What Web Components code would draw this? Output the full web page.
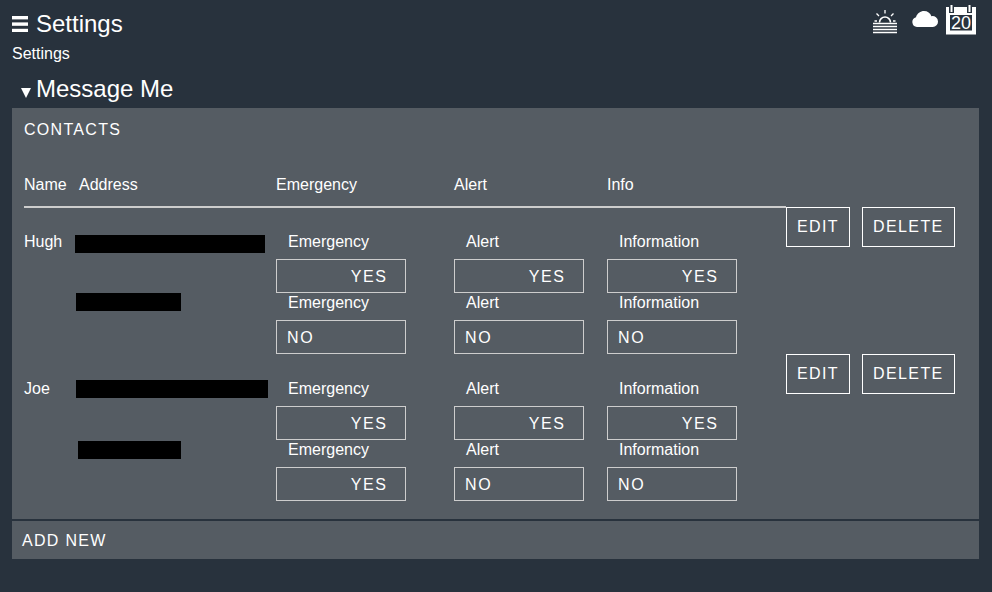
<!DOCTYPE html>
<html>
<head>
<meta charset="utf-8">
<title>Settings</title>
<style>
    html, body {
        margin: 0;
        height: 592px;
        overflow: hidden;
        background: #28323d;
        color: #fff;
        font: 16px/18px "Liberation Sans", Arial, sans-serif;
    }
</style>
</head>
<body>
<settings-page>
    <app-header title="Settings" crumb="Settings"></app-header>
    <section-title>Message Me</section-title>
    <contact-panel>
        <contact-row name="Hugh">
            <redacted-block slot="address" left="0" top="28" width="190"></redacted-block>
            <redacted-block slot="address" left="1" top="40" width="105"></redacted-block>
            <toggle-field slot="emergency" label="Emergency" on></toggle-field>
            <toggle-field slot="emergency" label="Emergency"></toggle-field>
            <toggle-field slot="alert" label="Alert" on></toggle-field>
            <toggle-field slot="alert" label="Alert"></toggle-field>
            <toggle-field slot="info" label="Information" on></toggle-field>
            <toggle-field slot="info" label="Information"></toggle-field>
        </contact-row>
        <contact-row name="Joe">
            <redacted-block slot="address" left="1" top="26" width="192"></redacted-block>
            <redacted-block slot="address" left="3" top="43" width="103"></redacted-block>
            <toggle-field slot="emergency" label="Emergency" on></toggle-field>
            <toggle-field slot="emergency" label="Emergency" on></toggle-field>
            <toggle-field slot="alert" label="Alert" on></toggle-field>
            <toggle-field slot="alert" label="Alert"></toggle-field>
            <toggle-field slot="info" label="Information" on></toggle-field>
            <toggle-field slot="info" label="Information"></toggle-field>
        </contact-row>
    </contact-panel>
    <add-bar>ADD NEW</add-bar>
</settings-page>

<script>
const COLUMNS = "51px 201px 178px 153px 179px 1fr";

class SettingsPage extends HTMLElement {
    constructor() {
        super();
        this.attachShadow({ mode: "open" });
        this.shadowRoot.innerHTML = `
            <style>
                :host { display: block; padding: 0 13px 0 12px; }
            </style>
            <slot></slot>
        `;
    }
}

class AppHeader extends HTMLElement {
    constructor() {
        super();
        this.attachShadow({ mode: "open" });
    }

    connectedCallback() {
        this.shadowRoot.innerHTML = `
            <style>
                :host { display: block; height: 75px; }
                .top { display: flex; align-items: flex-start; height: 45px; }
                .menu { width: 16px; height: 16px; margin: 16px 8px 0 0; flex: none; }
                h1 { margin: 10px 0 0; font: 24px/28px "Liberation Sans", Arial, sans-serif; flex: 1; }
                .icons { display: flex; align-items: flex-start; margin-right: 3px; }
                .sun { width: 24px; height: 24px; margin: 10px 15px 0 0; }
                .cloud { width: 26px; height: 16px; margin: 11px 8px 0 0; }
                .calendar { position: relative; width: 30px; height: 30px; margin-top: 5px; }
                .calendar svg { display: block; }
                .day {
                    position: absolute;
                    left: 0;
                    right: 0;
                    top: 9px;
                    text-align: center;
                    font-size: 18px;
                    line-height: 18px;
                }
                .crumb { height: 18px; }
            </style>
            <div class="top">
                <svg class="menu" viewBox="0 0 16 16" fill="#fff">
                    <rect y="0" width="16" height="3.4"/>
                    <rect y="6.4" width="16" height="3.4"/>
                    <rect y="12.8" width="16" height="3.2"/>
                </svg>
                <h1>${this.getAttribute("title")}</h1>
                <div class="icons">
                    <svg class="sun" viewBox="0 0 24 24" fill="none" stroke="#fff">
                        <path d="M6.5 12.5a5.5 5.5 0 0 1 11 0" stroke-width="1.6"/>
                        <path d="M12 0v3.5M3.5 3.5l2.5 2.5M20.5 3.5L18 6M1.5 11h2.5M20 11h2.5" stroke-width="1.3"/>
                        <path d="M0 13.5h24M0 16.5h24M0 19.5h24M0 22.5h24" stroke-width="1.5"/>
                    </svg>
                    <svg class="cloud" viewBox="0 0 26 16" fill="#fff">
                        <path d="M5 16a5 5 0 0 1-1-9.8C5 2.500 8.500 0 12 0c3.600 0 6.300 2 7.400 5.200A5.500 5.500 0 0 1 26 10.500 5.400 5.400 0 0 1 20.800 16z"/>
                    </svg>
                    <div class="calendar">
                        <svg width="30" height="30" viewBox="0 0 30 30">
                            <rect y="2" width="30" height="27.500" fill="#fff"/>
                            <rect x="4" y="10" width="22" height="15.500" fill="#28323d"/>
                            <rect x="3" y="2" width="5" height="6" fill="#28323d"/>
                            <rect x="21" y="2" width="5" height="6" fill="#28323d"/>
                            <rect x="4.500" y="0" width="2" height="7" fill="#fff"/>
                            <rect x="22.500" y="0" width="2" height="7" fill="#fff"/>
                        </svg>
                        <span class="day">20</span>
                    </div>
                </div>
            </div>
            <div class="crumb">${this.getAttribute("crumb")}</div>
        `;
    }
}

class SectionTitle extends HTMLElement {
    constructor() {
        super();
        this.attachShadow({ mode: "open" });
        this.shadowRoot.innerHTML = `
            <style>
                :host {
                    display: flex;
                    align-items: center;
                    height: 28px;
                    padding-left: 9px;
                    font-size: 24px;
                    line-height: 28px;
                    margin-bottom: 5px;
                }
                svg { width: 10px; height: 10px; margin: 8px 5px 0 0; }
            </style>
            <svg viewBox="0 0 10 10" fill="#fff"><path d="M0 0h10L5 10z"/></svg>
            <slot></slot>
        `;
    }
}

class ContactPanel extends HTMLElement {
    constructor() {
        super();
        this.attachShadow({ mode: "open" });
        this.shadowRoot.innerHTML = `
            <style>
                :host {
                    display: block;
                    background: #555c63;
                    padding: 13px 12px 18px;
                    height: 380px;
                }
                .title { letter-spacing: 1.3px; line-height: 18px; }
                .head {
                    display: grid;
                    grid-template-columns: ${COLUMNS};
                    margin-top: 37px;
                }
                .head span { height: 18px; }
                .head .address { padding-left: 4px; }
                hr {
                    margin: 12px 0 -1px;
                    width: 762px;
                    height: 2px;
                    border: 0;
                    background: #cdcdcd;
                }
            </style>
            <div class="title">CONTACTS</div>
            <div class="head">
                <span>Name</span>
                <span class="address">Address</span>
                <span>Emergency</span>
                <span>Alert</span>
                <span>Info</span>
            </div>
            <hr>
            <slot></slot>
        `;
    }
}

class ContactRow extends HTMLElement {
    constructor() {
        super();
        this.attachShadow({ mode: "open" });
    }

    connectedCallback() {
        this.shadowRoot.innerHTML = `
            <style>
                :host {
                    display: grid;
                    grid-template-columns: ${COLUMNS};
                    height: 147px;
                    position: relative;
                }
                .name { padding-top: 26px; }
                .toggles { padding-top: 25px; }
                .actions { display: flex; gap: 12px; align-items: flex-start; }
            </style>
            <div class="name">${this.getAttribute("name")}</div>
            <div><slot name="address"></slot></div>
            <div class="toggles"><slot name="emergency"></slot></div>
            <div class="toggles"><slot name="alert"></slot></div>
            <div class="toggles"><slot name="info"></slot></div>
            <div class="actions">
                <action-button width="64">EDIT</action-button>
                <action-button width="93">DELETE</action-button>
            </div>
        `;
    }
}

class RedactedBlock extends HTMLElement {
    constructor() {
        super();
        this.attachShadow({ mode: "open" });
    }

    connectedCallback() {
        const left = this.getAttribute("left");
        const top = this.getAttribute("top");
        const width = this.getAttribute("width");
        this.shadowRoot.innerHTML = `
            <style>
                :host {
                    display: block;
                    height: 18px;
                    background: #000;
                    margin: ${top}px 0 0 ${left}px;
                    width: ${width}px;
                }
            </style>
        `;
    }
}

class ToggleField extends HTMLElement {
    constructor() {
        super();
        this.attachShadow({ mode: "open" });
    }

    connectedCallback() {
        const on = this.hasAttribute("on");
        this.shadowRoot.innerHTML = `
            <style>
                :host { display: block; height: 61px; }
                .label { height: 26px; padding: 1px 0 0 12px; }
                .box {
                    box-sizing: border-box;
                    width: 130px;
                    height: 34px;
                    border: 1px solid #cdcdcd;
                    padding: 0 17.4px 0 10px;
                    line-height: 33px;
                    letter-spacing: 1.6px;
                    text-align: ${on ? "right" : "left"};
                }
            </style>
            <div class="label">${this.getAttribute("label")}</div>
            <div class="box">${on ? "YES" : "NO"}</div>
        `;
    }
}

class ActionButton extends HTMLElement {
    constructor() {
        super();
        this.attachShadow({ mode: "open" });
    }

    connectedCallback() {
        this.shadowRoot.innerHTML = `
            <style>
                :host {
                    display: block;
                    box-sizing: border-box;
                    width: ${this.getAttribute("width")}px;
                    height: 40px;
                    border: 1px solid #fff;
                    padding-left: 10px;
                    line-height: 38px;
                    letter-spacing: 1.4px;
                    cursor: pointer;
                }
            </style>
            <slot></slot>
        `;
    }
}

class AddBar extends HTMLElement {
    constructor() {
        super();
        this.attachShadow({ mode: "open" });
        this.shadowRoot.innerHTML = `
            <style>
                :host {
                    display: block;
                    height: 38px;
                    margin-top: 2px;
                    padding-left: 10px;
                    background: #555c63;
                    line-height: 40px;
                    letter-spacing: 1.3px;
                }
            </style>
            <slot></slot>
        `;
    }
}

customElements.define("settings-page", SettingsPage);
customElements.define("app-header", AppHeader);
customElements.define("section-title", SectionTitle);
customElements.define("contact-panel", ContactPanel);
customElements.define("contact-row", ContactRow);
customElements.define("redacted-block", RedactedBlock);
customElements.define("toggle-field", ToggleField);
customElements.define("action-button", ActionButton);
customElements.define("add-bar", AddBar);
</script>
</body>
</html>
